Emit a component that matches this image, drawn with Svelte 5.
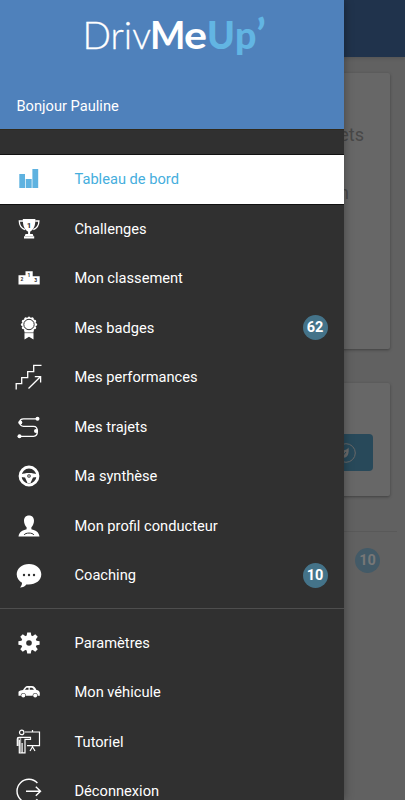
<script>
  const main = [
    { id: 'bars', label: 'Tableau de bord', active: true },
    { id: 'cup', label: 'Challenges' },
    { id: 'podium', label: 'Mon classement' },
    { id: 'medal', label: 'Mes badges', count: 62 },
    { id: 'stairs', label: 'Mes performances' },
    { id: 'route', label: 'Mes trajets' },
    { id: 'wheel', label: 'Ma synthèse' },
    { id: 'user', label: 'Mon profil conducteur' },
    { id: 'chat', label: 'Coaching', count: 10 }
  ];
  const extra = [
    { id: 'gear', label: 'Paramètres' },
    { id: 'car', label: 'Mon véhicule' },
    { id: 'board', label: 'Tutoriel' },
    { id: 'exit', label: 'Déconnexion' }
  ];
  const teeth = [0, 45, 90, 135, 180, 225, 270, 315];
  const petals = Array.from({ length: 12 }, (_, i) => i * 30);
</script>

{#snippet icon(id)}
  <svg class="icon" viewBox="0 0 28 28" width="28" height="28" fill="currentColor" aria-hidden="true">
    {#if id === 'bars'}
      <path d="M4.3 9h5.7v14H4.3zM10.7 14h6v9h-6zM17.4 4h5.8v19h-5.8z" />
    {:else if id === 'cup'}
      <path d="M7.8 4h12.6c0 7-1.5 10.4-5.3 12.700v2.600h-2v-2.600C9.300 14.400 7.800 11 7.800 4z" />
      <path d="M8 6H4.300c0 4 2 7.200 5.600 8.600M20.200 6h3.700c0 4-2 7.200-5.600 8.600" fill="none" stroke="currentColor" stroke-width="1.300" />
      <path d="M10.500 19h7.200l.7 2H9.800zM9 21.200h10.200v2.300H9z" />
      <text x="14.100" y="13.200" class="one">1</text>
    {:else if id === 'podium'}
      <path d="M3.500 11.200h7V7.300h7.200V12.300h7v8.200H3.500z" />
      <g class="tiny"><text x="7" y="17">2</text><text x="14" y="13">1</text><text x="20.800" y="18">3</text></g>
    {:else if id === 'medal'}
      <path d="M9.500 16h9v9.500L14 22.800l-4.500 2.700z" />
      <circle cx="14" cy="10.500" r="6.900" />
      {#each petals as a}<circle cx="14" cy="3.900" r="1.500" transform="rotate({a} 14 10.500)" />{/each}
      <circle cx="14" cy="10.500" r="5.200" fill="none" stroke="#303030" stroke-width="1" />
      <path d="M8.500 18.700h11" stroke="#303030" stroke-width=".6" />
    {:else if id === 'stairs'}
      <g fill="none" stroke="currentColor" stroke-width="1.300">
        <path d="M1.200 26.500v-5.800h5.500v-6h6v-6h6V2.400h7.800" />
        <path d="M13.500 25.500 25.400 13.800M19.800 13.600h5.800v5.800" />
      </g>
    {:else if id === 'route'}
      <path d="M22 5.800H8.500c-5 0-5 7.500 0 7.500h10c5.200 0 5.200 10 0 10H5" fill="none" stroke="currentColor" stroke-width="1.300" />
      <circle cx="22.500" cy="5.800" r="2" /><circle cx="5.300" cy="9.500" r="2" />
      <circle cx="21" cy="18" r="2" /><circle cx="4.500" cy="23.300" r="2" />
    {:else if id === 'wheel'}
      <circle cx="14" cy="14" r="8.900" fill="none" stroke="currentColor" stroke-width="3" />
      <path d="M6 12.400c4-2 12-2 16 0v2.600l-4 .5-2.500 5.500h-3L10 15.500l-4-.5z" />
      <circle cx="14" cy="14" r="1.800" fill="#303030" /><circle cx="14" cy="14" r=".8" />
    {:else if id === 'user'}
      <path d="M14 3.400c-3.300 0-5 2.200-5 5.300 0 2.400 1 5 2.600 6.500v2c-4.300 1.600-7.200 2-8.100 7.300h21c-.9-5.300-3.800-5.700-8.100-7.300v-2C18 13.700 19 11.100 19 8.700c0-3.100-1.700-5.300-5-5.300z" />
      <path d="M9 23c1.500-2.600 8.500-2.600 10 0" fill="none" stroke="#303030" stroke-width="1" />
    {:else if id === 'chat'}
      <path d="M14 3C7 3 1.700 7.300 1.700 13.300c0 4 2.300 6.700 5.300 8.500 0 2-.7 3.300-2 4.700 3 0 5-1.400 6.300-3.100C19.500 24.400 26.300 20 26.300 13.300 26.300 7.300 21 3 14 3z" />
      <g fill="#303030"><circle cx="9" cy="14" r="1.200" /><circle cx="14" cy="14" r="1.200" /><circle cx="19" cy="14" r="1.200" /></g>
    {:else if id === 'gear'}
      {#each teeth as a}<path d="M11.500 8 12.200 3.400h3.600L16.500 8z" transform="rotate({a} 14 14)" />{/each}
      <circle cx="14" cy="14" r="7.800" /><circle cx="14" cy="14" r="2.800" fill="#303030" />
    {:else if id === 'car'}
      <path d="M3.500 17.800v-4c1-1.300 2.800-1.500 4.500-1.800 1.400-2 2.500-3.900 4.500-3.900h4.300c2.500 0 3.700 2 4.700 3.800 2 .3 3.300 1.400 3.300 3.200v2.700z" />
      <path d="m9.900 11.700 1.700-2h1.900v2zM14.800 9.700h2c.9 0 1.600 1 2.100 2h-4.100z" fill="#303030" />
      <circle cx="8.300" cy="17.400" r="2.500" fill="#303030" /><circle cx="20.200" cy="17.400" r="2.500" fill="#303030" />
      <circle cx="8.300" cy="17.400" r="2" /><circle cx="20.200" cy="17.400" r="2" />
    {:else if id === 'board'}
      <g fill="none" stroke="currentColor" stroke-width="1.200">
        <path d="M10 4h14.500v13.700H12M17.500 4V2M17.500 17.800v1.500M15 23l2.500-4.200L20 23" />
        <circle cx="6.700" cy="4.400" r="2.200" />
        <path d="M2.300 18v-7c0-1 .6-1.700 1.700-1.700h11.500v2H10v13.500H4.300V12M7.100 15v9.500" />
      </g>
      <path d="M2.200 9.500h2.300v8.500H2.200zM5 10h1.200v14H5z" opacity=".6" />
    {:else}
      <g fill="none" stroke="currentColor" stroke-width="1.400">
        <path d="M22.400 6a11.800 11.800 0 1 0 0 16.200" />
        <path d="M11 14.200h14.500M20.800 9.700l4.700 4.500-4.700 4.500" />
      </g>
    {/if}
  </svg>
{/snippet}

{#snippet row(item)}
  <a class="row" class:active={item.active} href="#{item.id}">
    {@render icon(item.id)}
    <span class="label">{item.label}</span>
    {#if item.count}<span class="badge">{item.count}</span>{/if}
  </a>
{/snippet}

<div class="screen">
  <main class="page">
    <header class="bar"></header>
    <section class="card stats">
      <p>ets</p>
      <p class="second">n</p>
    </section>
    <section class="card eco">
      <div class="button">
        <svg width="20" height="20" viewBox="0 0 20 20">
          <circle cx="10" cy="10" r="9.300" fill="none" stroke="#686868" stroke-width="1" />
          <path d="M12.500 4.500c.7 5-.2 10-4.700 10.200-2.800.2-4.300-1.500-4-4 .5-4 6.500-2.500 8.700-6.200z" fill="#6b6b6b" />
          <path d="m7.500 12 2.500-3" stroke="#28495a" />
        </svg>
      </div>
    </section>
    <div class="notice"><span class="badge">10</span></div>
  </main>

  <nav class="drawer">
    <header class="head">
      <svg class="logo" width="200" height="56" viewBox="0 0 200 56">
        <text x="3.500" y="41" class="light" textLength="68.500" lengthAdjust="spacingAndGlyphs">Driv</text>
        <text x="71" y="41" class="bold">M</text>
        <text x="105" y="41" class="bold" textLength="23" lengthAdjust="spacingAndGlyphs">e</text>
        <text x="128" y="41" class="up">U</text>
        <text x="156" y="41" class="up">p</text>
        <text x="177.500" y="41" class="up tick">’</text>
      </svg>
      <span class="hello">Bonjour Pauline</span>
    </header>
    <div class="list">
      {#each main as item}{@render row(item)}{/each}
    </div>
    <div class="list more">
      {#each extra as item}{@render row(item)}{/each}
    </div>
  </nav>
</div>

<style>
  :global(body) { margin: 0; overflow: hidden; }
  .screen {
    position: relative;
    height: 800px;
    overflow: hidden;
    background: #616161;
    font-family: Roboto, sans-serif;
  }
  .page { display: flex; flex-direction: column; height: 800px; }
  .bar { height: 57px; background: #20334c; box-shadow: 0 1px 4px rgba(0, 0, 0, .15); }
  .card {
    margin: 0 15px;
    box-sizing: border-box;
    border-radius: 2px;
    background: #676767;
    box-shadow: 0 1px 3px rgba(0, 0, 0, .35);
  }
  .stats {
    height: 276px;
    margin-top: 16px;
    padding: 50px 26px 0;
    text-align: right;
    color: #484848;
    font-size: 18px;
    line-height: 24px;
  }
  .stats p { margin: 0; }
  .stats .second { margin: 34px 15px 0 0; }
  .eco { height: 113px; margin-top: 34px; padding: 51px 17px 0; }
  .button {
    display: flex;
    align-items: center;
    justify-content: flex-end;
    box-sizing: border-box;
    height: 37px;
    padding-right: 17px;
    border-radius: 4px;
    background: #28495a;
  }
  .notice {
    display: flex;
    justify-content: flex-end;
    margin: 35px 8px 0;
    padding: 16px 17px 0;
    border-top: 1px solid #595959;
  }
  .notice .badge { background: #435a67; color: #777; }
  .drawer {
    position: absolute;
    inset: 0 auto 0 0;
    width: 344px;
    overflow: hidden;
    background: #303030;
    box-shadow: 0 0 9px rgba(0, 0, 0, .35);
  }
  .head {
    display: flex;
    flex-direction: column;
    box-sizing: border-box;
    height: 130px;
    padding-top: 8px;
    background: #4f81bb;
    border-bottom: 1px solid #30291c;
  }
  .logo { margin-left: 79px; overflow: visible; font-family: Lato, sans-serif; font-size: 37.500px; fill: #fff; }
  .light { font-weight: 300; stroke: #fff; stroke-width: .3px; }
  .bold { font-weight: 700; }
  .up { font-weight: 900; fill: #62b5e3; }
  .tick { font-size: 41px; }
  .hello { margin: 33px 0 0 16.500px; color: #fff; font-size: 14.650px; line-height: 19px; }
  .list { padding-top: 24.500px; }
  .more { margin-top: 8px; padding-top: 9px; border-top: 1px solid #4e4e4e; }
  .row {
    display: flex;
    align-items: center;
    box-sizing: border-box;
    height: 49.500px;
    padding: .4px 16.500px 0 15px;
    color: #fff;
    text-decoration: none;
    font-size: 14.650px;
  }
  .active { background: #fff; color: #45aedd; box-shadow: 0 0 0 1px #111; }
  .active .icon { color: #5eb2e0; }
  .icon { flex: none; }
  .label { flex: 1; margin-left: 31.500px; }
  .badge {
    width: 25px;
    height: 25px;
    border-radius: 50%;
    background: #447389;
    color: #fff;
    font-size: 14.500px;
    font-weight: 700;
    line-height: 25px;
    text-align: center;
  }
  .one { font: 700 8px Roboto, sans-serif; fill: #303030; text-anchor: middle; }
  .tiny { font: 700 5px Roboto, sans-serif; fill: #303030; text-anchor: middle; }
</style>
